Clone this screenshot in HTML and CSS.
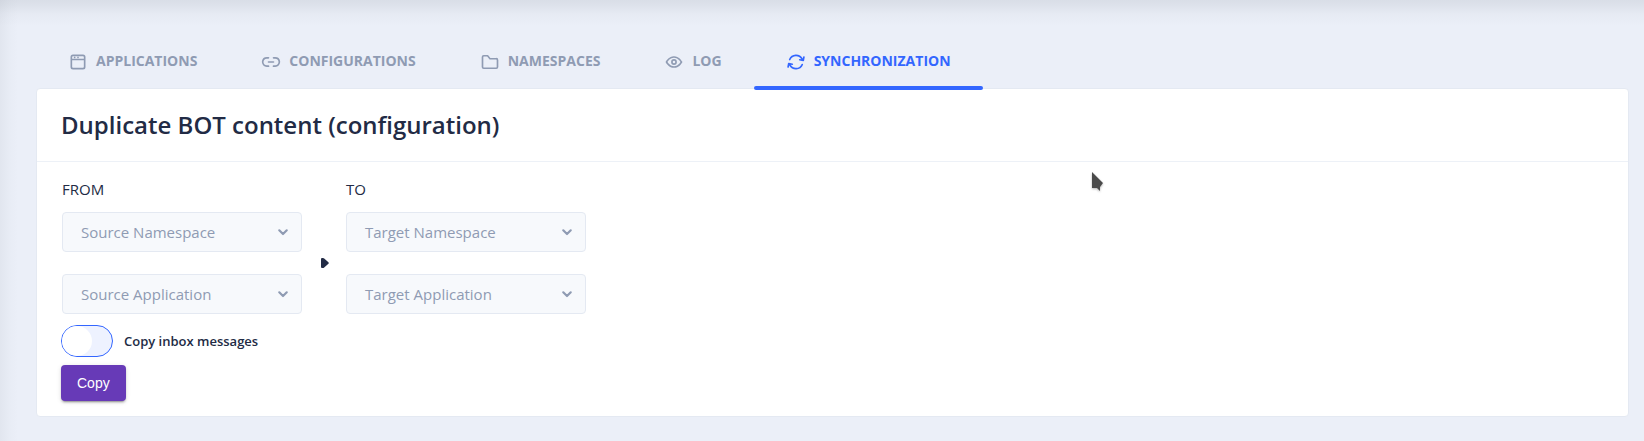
FILE: index.html
```html
<!DOCTYPE html>
<html lang="en">
<head>
<meta charset="utf-8">
<title>Synchronization</title>
<link rel="stylesheet" href="styles.css">
</head>
<body>
<main class="page">
  <nav class="tabs">
    <a class="tab"><svg class="icon" viewBox="0 0 24 24"><path d="M18 3H6a3 3 0 0 0-3 3v12a3 3 0 0 0 3 3h12a3 3 0 0 0 3-3V6a3 3 0 0 0-3-3zM6 5h12a1 1 0 0 1 1 1v2H5V6a1 1 0 0 1 1-1zm12 14H6a1 1 0 0 1-1-1v-8h14v8a1 1 0 0 1-1 1z"/><circle cx="8" cy="6.500" r="1"/><circle cx="12" cy="6.500" r="1"/></svg><span class="tab-label">APPLICATIONS</span></a>
    <a class="tab"><svg class="icon" viewBox="0 0 24 24"><path d="M8 12a1 1 0 0 0 1 1h6a1 1 0 0 0 0-2H9a1 1 0 0 0-1 1z"/><path d="M9 16H7.210A4.130 4.130 0 0 1 3 12.370 4 4 0 0 1 7 8h2a1 1 0 0 0 0-2H7.210a6.150 6.150 0 0 0-6.160 5.210A6 6 0 0 0 7 18h2a1 1 0 0 0 0-2z"/><path d="M23 11.240A6.160 6.160 0 0 0 16.760 6h-1.510C14.440 6 14 6.450 14 7a1 1 0 0 0 1 1h1.790A4.130 4.130 0 0 1 21 11.630 4 4 0 0 1 17 16h-2a1 1 0 0 0 0 2h2a6 6 0 0 0 6-6.760z"/></svg><span class="tab-label">CONFIGURATIONS</span></a>
    <a class="tab"><svg class="icon" viewBox="0 0 24 24"><path d="M19.500 20.500h-15A2.470 2.470 0 0 1 2 18.070V5.930A2.470 2.470 0 0 1 4.500 3.500h4.600a1 1 0 0 1 .77.370l2.600 3.180h7A2.470 2.470 0 0 1 22 9.480v8.590a2.470 2.470 0 0 1-2.500 2.430zM4 13.760v4.310a.46.460 0 0 0 .5.430h15a.46.460 0 0 0 .5-.43V9.480a.46.460 0 0 0-.5-.43H12a1 1 0 0 1-.77-.37L8.630 5.500H4.500a.46.460 0 0 0-.5.430z"/></svg><span class="tab-label">NAMESPACES</span></a>
    <a class="tab"><svg class="icon" viewBox="0 0 24 24"><path d="M21.870 11.500c-.64-1.110-4.160-6.680-10.140-6.500-5.530.14-8.730 5-9.600 6.500a1 1 0 0 0 0 1c.63 1.090 4 6.500 9.890 6.500h.25c5.530-.14 8.740-5 9.600-6.500a1 1 0 0 0 0-1zM12.220 17c-4.310.1-7.120-3.590-8-5 1-1.610 3.610-4.900 7.610-5 4.290-.11 7.110 3.590 8 5-1.030 1.610-3.610 4.900-7.610 5z"/><path d="M12 8.500a3.500 3.500 0 1 0 3.500 3.500A3.500 3.500 0 0 0 12 8.500zm0 5a1.500 1.500 0 1 1 1.500-1.500 1.500 1.500 0 0 1-1.500 1.500z"/></svg><span class="tab-label">LOG</span></a>
    <a class="tab active"><svg class="icon" viewBox="0 0 24 24"><path d="M21.660 10.370a.62.620 0 0 0 .07-.19l.75-4a1 1 0 0 0-2-.36l-.37 2a9.220 9.220 0 0 0-16.580.84 1 1 0 0 0 .55 1.300 1 1 0 0 0 1.310-.55A7.080 7.080 0 0 1 12.070 5a7.170 7.170 0 0 1 6.240 3.580l-1.650-.27a1 1 0 1 0-.32 2l4.250.71h.16a.93.930 0 0 0 .34-.06.33.330 0 0 0 .1-.06.78.780 0 0 0 .2-.11l.08-.1a1.070 1.070 0 0 0 .14-.16.580.580 0 0 0 .05-.16z"/><path d="M19.880 14.070a1 1 0 0 0-1.310.56A7.080 7.080 0 0 1 11.930 19a7.170 7.170 0 0 1-6.240-3.580l1.650.27h.16a1 1 0 0 0 .16-2L3.410 13a.91.910 0 0 0-.33 0H3a1.150 1.150 0 0 0-.32.140 1 1 0 0 0-.18.180l-.09.1a.84.840 0 0 0-.07.190.44.440 0 0 0-.07.170l-.75 4a1 1 0 0 0 .8 1.220h.18a1 1 0 0 0 1-.82l.37-2a9.220 9.220 0 0 0 16.580-.83 1 1 0 0 0-.57-1.280z"/></svg><span class="tab-label">SYNCHRONIZATION</span></a>
  </nav>

  <section class="card">
    <h1 class="card-title">Duplicate BOT content (configuration)</h1>
    <div class="card-body">
      <div class="transfer">
        <div class="column">
          <span class="column-label">FROM</span>
          <div class="select"><span>Source Namespace</span><svg class="chevron" viewBox="0 0 24 24"><path d="M7.500 10l4.500 4.500 4.500-4.500"/></svg></div>
          <div class="select"><span>Source Application</span><svg class="chevron" viewBox="0 0 24 24"><path d="M7.500 10l4.500 4.500 4.500-4.500"/></svg></div>
        </div>
        <svg class="arrow" viewBox="0 0 8 10"><path d="M0 1Q0 0 1 0H2Q2.600 0 3.200.5L7.400 4.200Q8.200 5 7.400 5.800L3.200 9.500Q2.600 10 2 10H1Q0 10 0 9Z"/></svg>
        <div class="column">
          <span class="column-label">TO</span>
          <div class="select"><span>Target Namespace</span><svg class="chevron" viewBox="0 0 24 24"><path d="M7.500 10l4.500 4.500 4.500-4.500"/></svg></div>
          <div class="select"><span>Target Application</span><svg class="chevron" viewBox="0 0 24 24"><path d="M7.500 10l4.500 4.500 4.500-4.500"/></svg></div>
        </div>
      </div>
      <label class="toggle"><span class="track"><span class="thumb"></span></span><span>Copy inbox messages</span></label>
      <button class="copy" type="button">Copy</button>
    </div>
  </section>
</main>
<svg class="cursor" viewBox="0 0 16 24"><path d="M2 2V18H7L10 21V17H10L13 13Z"/></svg>
</body>
</html>
```

FILE: styles.css
```css
* { box-sizing: border-box; }

body {
  margin: 0;
  font-family: "Open Sans", sans-serif;
  font-size: 15px;
  color: #222b45;
  background: #ebeff8;
}

.page {
  height: 441px;
  padding: 34px 15px 23px 36px;
  background:
    linear-gradient(to bottom, rgba(140, 148, 158, .19), rgba(140, 148, 158, .15) 5px, rgba(140, 148, 158, .05) 14px, rgba(140, 148, 158, 0) 26px),
    linear-gradient(to right, rgba(140, 148, 158, .1), rgba(140, 148, 158, .03) 10px, rgba(140, 148, 158, 0) 18px),
    #ebeff8;
  overflow: hidden;
}

.tabs { display: flex; height: 54px; }

.tab {
  display: flex;
  align-items: center;
  gap: 8px;
  height: 56px;
  padding: 0 32px 1px;
  font-size: 14px;
  font-weight: 700;
  line-height: 24px;
  color: #8f9bb3;
  position: relative;
}

.tab-label { padding-bottom: 2px; }

.tab.active { color: #3366ff; }

.tab.active::after {
  content: "";
  position: absolute;
  left: 0;
  right: 0;
  bottom: 0;
  height: 4px;
  border-radius: 2px;
  background: #3366ff;
}

.icon { width: 20px; height: 20px; fill: currentColor; }

.card {
  height: 329px;
  border: 1px solid #e4e9f2;
  border-radius: 4px;
  background: #fff;
}

.card-title {
  margin: 0;
  height: 73px;
  padding: 20px 24px;
  border-bottom: 1px solid #edf1f7;
  font-size: 24px;
  font-weight: 600;
  line-height: 32px;
}

.card-body { padding: 15px 24px; }

.transfer { display: flex; padding-left: 1px; }

.column { display: flex; flex-direction: column; width: 240px; }

.column-label { height: 35px; line-height: 24px; }

.select {
  display: flex;
  align-items: center;
  justify-content: space-between;
  height: 40px;
  margin-bottom: 22px;
  padding: 0 8px 0 18px;
  border: 1px solid #e4e9f2;
  border-radius: 4px;
  background: #f7f9fc;
  color: #8f9bb3;
}

.chevron { width: 20px; height: 20px; fill: none; stroke: #8f9bb3; stroke-width: 2.6; stroke-linecap: round; stroke-linejoin: round; }

.arrow { width: 8px; height: 10px; margin: 81px 17px 0 19px; fill: #222b45; }

.toggle {
  display: flex;
  align-items: center;
  gap: 11px;
  height: 32px;
  margin-top: -11px;
  font-size: 13px;
  font-weight: 600;
}

.track { width: 52px; height: 32px; border: 1px solid #3366ff; border-radius: 16px; background: #eef2ff; }

.thumb { display: block; width: 30px; height: 30px; border-radius: 50%; background: #fff; }

.copy {
  display: block;
  height: 36px;
  margin-top: 8px;
  padding: 0 16px;
  border: 0;
  border-radius: 4px;
  background: #673ab7;
  color: #fff;
  font: 14px/36px "Liberation Sans", Arial, sans-serif;
  box-shadow: 0 3px 1px -2px rgba(0,0,0,.2), 0 2px 2px rgba(0,0,0,.14), 0 1px 5px rgba(0,0,0,.12);
}

.cursor {
  position: absolute;
  left: 1090px;
  top: 170px;
  width: 16px;
  height: 24px;
  fill: #4a4a4a;
  filter: drop-shadow(0 1px 1px rgba(0,0,0,.3));
}
```
